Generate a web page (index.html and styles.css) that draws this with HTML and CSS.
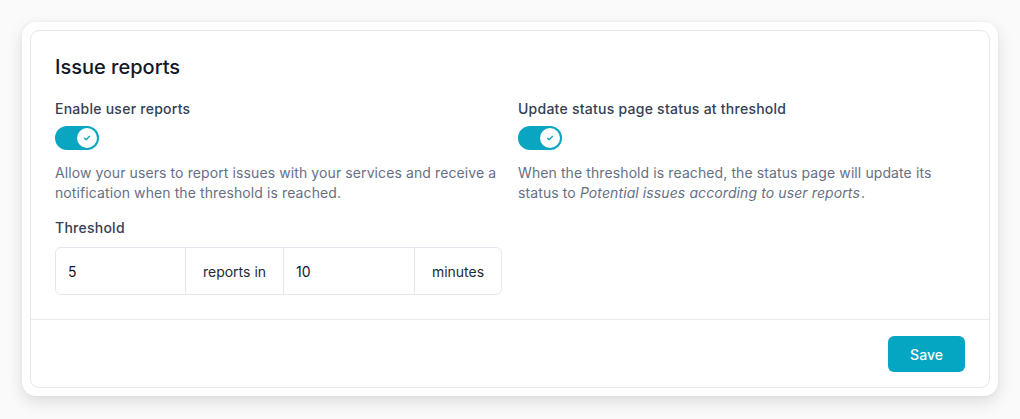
FILE: index.html
```html
<!DOCTYPE html>
<html>
<head>
<meta charset="utf-8">
<link rel="stylesheet" href="styles.css">
</head>
<body>
<div class="shell">
  <div class="card">
    <div class="card-body">
      <h2 class="title">Issue reports</h2>
      <div class="cols">
        <div class="col">
          <div class="label">Enable user reports</div>
          <div class="toggle"><span class="knob"><svg viewBox="0 0 12 12" width="10" height="10"><path d="M3 6.2 5 8 9 4" fill="none" stroke="#0aa5c0" stroke-width="1.6" stroke-linecap="round" stroke-linejoin="round"/></svg></span></div>
          <p class="desc">Allow your users to report issues with your services and receive a notification when the threshold is reached.</p>
          <div class="label label-th">Threshold</div>
          <div class="group">
            <div class="seg seg-in1">5</div>
            <div class="seg seg-add1">reports in</div>
            <div class="seg seg-in2">10</div>
            <div class="seg seg-add2">minutes</div>
          </div>
        </div>
        <div class="col">
          <div class="label">Update status page status at threshold</div>
          <div class="toggle"><span class="knob"><svg viewBox="0 0 12 12" width="10" height="10"><path d="M3 6.2 5 8 9 4" fill="none" stroke="#0aa5c0" stroke-width="1.6" stroke-linecap="round" stroke-linejoin="round"/></svg></span></div>
          <p class="desc"><span>When the threshold is reached, the status page will update its status to </span><em class="em">Potential issues according to user reports</em><span class="dot">.</span></p>
        </div>
      </div>
    </div>
    <div class="card-foot">
      <button class="btn">Save</button>
    </div>
  </div>
</div>
</body>
</html>
```
FILE: styles.css
```css
* { box-sizing: border-box; }
html, body { margin: 0; padding: 0; }
body {
  background: #fafafa;
  font-family: Inter, "Noto Sans", sans-serif;
  padding: 22px;
  width: 1020px;
  height: 419px;
}
.shell {
  width: 976px;
  background: #fff;
  border-radius: 14px;
  padding: 8px;
  box-shadow: 0 6px 16px rgba(0,0,0,0.12), 0 0 3px rgba(0,0,0,0.05);
}
.card {
  border: 1px solid #e5e7eb;
  border-radius: 9px;
  background: #fff;
}
.card-body {
  padding: 22px 24px 24px;
  border-bottom: 1px solid #e8eaee;
}
.title {
  margin: 0 0 18px;
  font-size: 20px;
  line-height: 28px;
  font-weight: 500;
  color: #111827;
}
.cols {
  display: grid;
  grid-template-columns: 447px 447px;
  gap: 16px;
}
.label {
  font-size: 14px;
  line-height: 20px;
  font-weight: 500;
  letter-spacing: 0.25px;
  color: #344054;
}
.label-th { margin-top: 15px; }
.toggle {
  margin-top: 7px;
  width: 44px;
  height: 24px;
  border-radius: 12px;
  background: #0aa5c0;
  display: flex;
  align-items: center;
  justify-content: flex-end;
  padding: 2px;
}
.knob {
  width: 20px;
  height: 20px;
  border-radius: 50%;
  background: #fff;
  display: flex;
  align-items: center;
  justify-content: center;
}
.desc {
  margin: 13px 0 0;
  font-size: 14px;
  line-height: 20px;
  letter-spacing: 0.1px;
  color: #667085;
}
.em { padding-right: 1px; }
.group {
  margin-top: 9px;
  display: flex;
  height: 48px;
  border: 1px solid #e3e8ef;
  border-radius: 6px;
  width: 447px;
}
.seg {
  display: flex;
  align-items: center;
  font-size: 14px;
  color: #111827;
}
.seg + .seg { border-left: 1px solid #e3e8ef; }
.seg-in1 { width: 129px; padding-left: 12px; }
.seg-add1 { width: 98px; justify-content: center; color: #1f2937; }
.seg-in2 { width: 131px; padding-left: 12px; }
.seg-add2 { flex: 1; justify-content: center; color: #1f2937; }
.card-foot {
  display: flex;
  justify-content: flex-end;
  padding: 16px 24px 15px;
}
.btn {
  width: 77px;
  height: 36px;
  border: 0;
  border-radius: 6px;
  background: #04a6c2;
  color: #fff;
  font-family: inherit;
  font-size: 14px;
  font-weight: 500;
}
```
